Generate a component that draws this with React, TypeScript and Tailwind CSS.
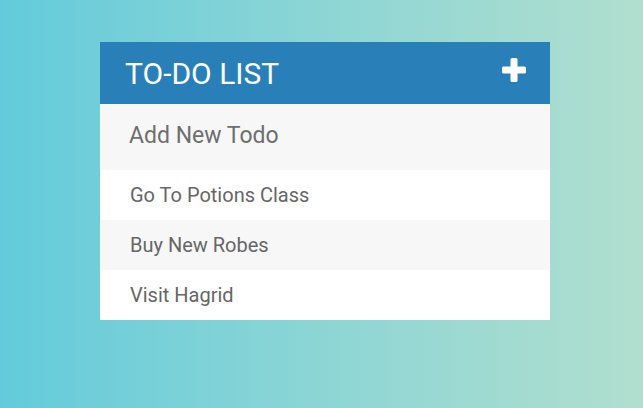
import React from "react";

export default function App() {
  const todos = ["Go To Potions Class", "Buy New Robes", "Visit Hagrid"];
  return (
    <div
      className="w-[643px] h-[408px] bg-gradient-to-r from-[#62cbdb] to-[#b0dfce] pt-[42px] pl-[100px]"
      style={{ fontFamily: "Roboto, 'Liberation Sans', sans-serif" }}
    >
      <div className="w-[450px] bg-white">
        <div className="h-[62px] bg-[#2980b9] flex items-center justify-between pl-[25px] pr-[24px]">
          <h1 className="text-white text-[30px] leading-none font-normal pt-[2px]">TO-DO LIST</h1>
          <svg width="24" height="24" viewBox="0 0 24 24" className="mb-[6px]">
            <rect x="8.5" y="0" width="7" height="24" rx="1.5" fill="#fff" />
            <rect x="0" y="8.5" width="24" height="7" rx="1.5" fill="#fff" />
          </svg>
        </div>
        <div className="h-[66px] bg-[#f7f7f7] flex items-start pl-[29px] pt-[20px]">
          <span className="text-[23px] text-[#6e6e6e] leading-none">Add New Todo</span>
        </div>
        {todos.map((t, i) => (
          <div
            key={t}
            className={`h-[50px] flex items-center pl-[30px] ${i % 2 === 1 ? "bg-[#f7f7f7]" : "bg-white"}`}
          >
            <span className="text-[20px] text-[#666] leading-none">{t}</span>
          </div>
        ))}
      </div>
    </div>
  );
}
